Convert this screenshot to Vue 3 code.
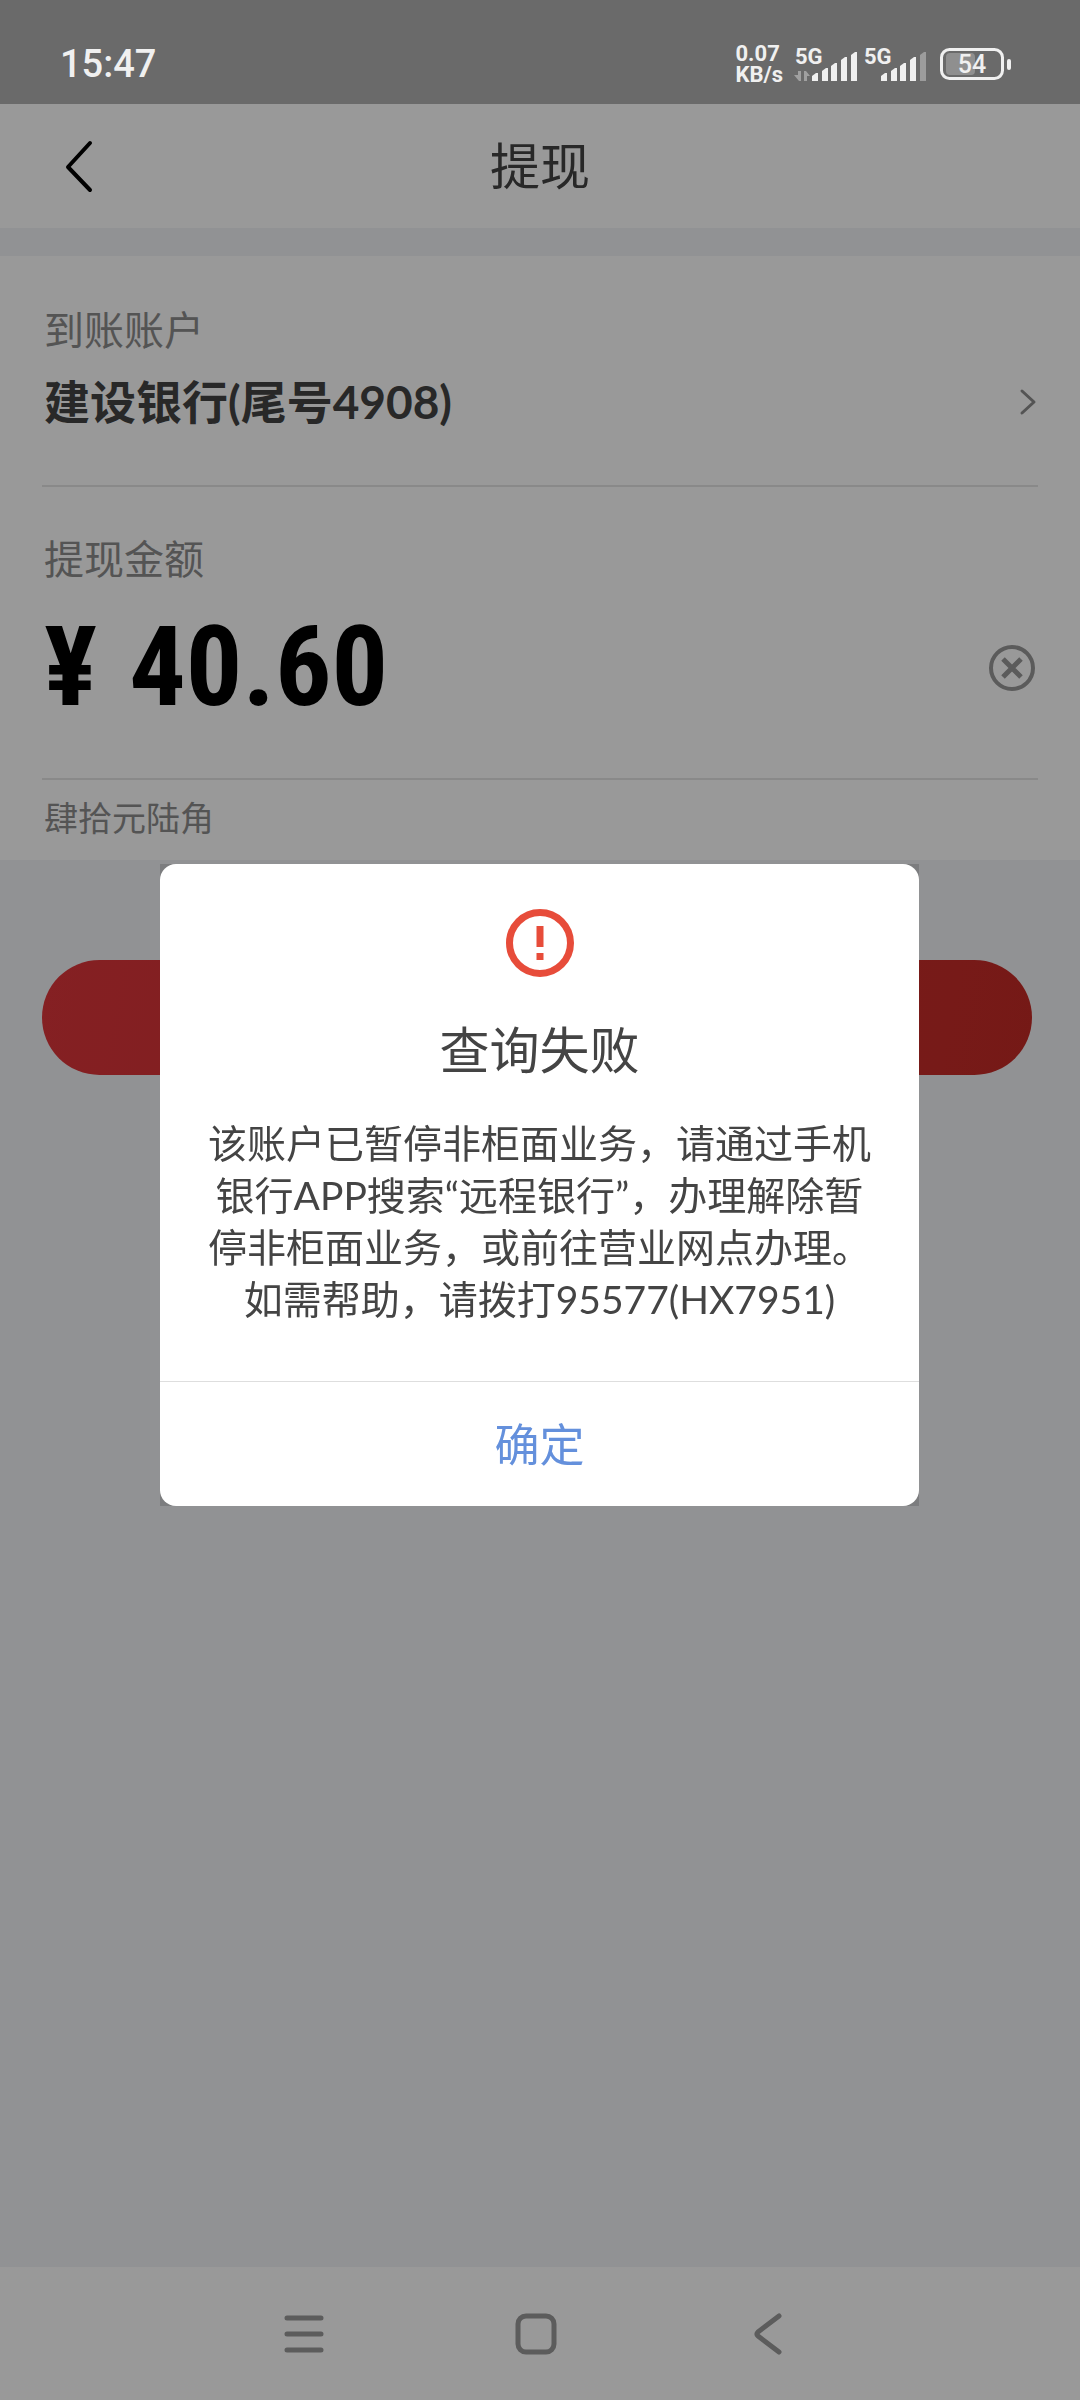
<template>
  <div class="page">
    <header class="status-bar">
      <span class="clock">15:47</span>
      <div class="status-icons">
        <div class="net-speed">
          <span>0.07</span>
          <span>KB/s</span>
        </div>
        <svg v-for="sim in sims" :key="sim.id" class="signal" viewBox="0 0 62 36">
          <text x="0" y="18" class="signal-text">5G</text>
          <g v-if="sim.data" fill="#a0a0a0">
            <path d="M6 25v10h-2l-5-6h4v-4z" />
            <path d="M9 35v-10h2l4 5h-3v5z" />
          </g>
          <path
            v-for="(bar, index) in bars"
            :key="index"
            :d="bar"
            :fill="index < sim.level ? '#f0f0f0' : '#9c9c9c'"
          />
        </svg>
        <svg class="battery" viewBox="0 0 72 32">
          <rect x="6" y="5" width="29" height="22" rx="4" fill="#8f8f8f" />
          <rect x="1.5" y="1.5" width="61" height="29" rx="8" fill="none" stroke="#f0f0f0" stroke-width="3" />
          <rect x="67" y="11" width="4" height="11" rx="2" fill="#f0f0f0" />
          <text x="32" y="25" text-anchor="middle" class="battery-text">54</text>
        </svg>
      </div>
    </header>

    <nav class="title-bar">
      <button class="back" type="button" aria-label="返回">
        <svg viewBox="0 0 30 54" width="30" height="54">
          <path d="M26 4L4 28l22 23" fill="none" stroke="#000" stroke-width="4" stroke-linecap="round" stroke-linejoin="round" />
        </svg>
      </button>
      <h1>提现</h1>
    </nav>

    <main class="content">
      <section class="card">
        <div class="account">
          <p class="label">到账账户</p>
          <button class="account-row" type="button">
            <span>建设银行(尾号4908)</span>
            <svg viewBox="0 0 16 28" width="16" height="28">
              <path d="M2 3l12 11L2 25" fill="none" stroke="#8c8c8c" stroke-width="3" stroke-linecap="round" stroke-linejoin="round" />
            </svg>
          </button>
        </div>
        <div class="amount">
          <label class="label" for="amount">提现金额</label>
          <div class="amount-row">
            <span class="currency">¥</span>
            <input id="amount" v-model="amount" type="text" inputmode="decimal" />
            <button class="clear" type="button" aria-label="清除" @click="amount = ''">
              <svg viewBox="0 0 48 48" width="48" height="48">
                <circle cx="24" cy="25" r="21" fill="none" stroke="#989898" stroke-width="4" />
                <path d="M15 16l18 18M33 16L15 34" stroke="#989898" stroke-width="5" />
              </svg>
            </button>
          </div>
        </div>
        <p class="amount-words">肆拾元陆角</p>
      </section>
      <button class="submit" type="button" aria-label="提现"></button>
    </main>

    <footer class="nav-bar">
      <button type="button" aria-label="菜单">
        <svg viewBox="0 0 44 44" width="44" height="44">
          <path d="M5 6h34M5 22h34M5 38h34" />
        </svg>
      </button>
      <button type="button" aria-label="主页">
        <svg viewBox="0 0 44 44" width="44" height="44">
          <rect x="4" y="4" width="36" height="36" rx="8" />
        </svg>
      </button>
      <button type="button" aria-label="后退">
        <svg viewBox="0 0 44 44" width="44" height="44">
          <path d="M33 4L12 20q-2 2 0 4l21 16" />
        </svg>
      </button>
    </footer>

    <div v-if="showDialog" class="overlay">
      <div class="dialog-frame">
        <div class="dialog" role="alertdialog" aria-labelledby="dialog-title">
          <svg class="warn" viewBox="0 0 68 68" width="68" height="68">
            <circle cx="34" cy="34" r="30.5" fill="none" stroke="#e74c3a" stroke-width="7" />
            <path d="M30.5 17h7v21h-7zM30.5 44h7v7h-7z" fill="#e74c3a" />
          </svg>
          <h2 id="dialog-title">查询失败</h2>
          <p class="message">
            <span v-for="line in messageLines" :key="line">{{ line }}</span>
          </p>
          <button class="confirm" type="button" @click="showDialog = false">确定</button>
        </div>
      </div>
    </div>
  </div>
</template>

<script setup>
import { ref } from 'vue'

const amount = ref('40.60')
const showDialog = ref(true)

const sims = [
  { id: 1, level: 5, data: true },
  { id: 2, level: 4, data: false }
]

// barres de signal, sommet en biais
const bars = [27, 22, 17, 11, 6].map((top, i) => {
  const x = 17 + i * 10 - (i > 1 ? 1 : 0)
  return `M${x} ${top + 3}l4 -3h2V35h-6z`
})

const messageLines = [
  '该账户已暂停非柜面业务，请通过手机',
  '银行APP搜索“远程银行”，办理解除暂',
  '停非柜面业务，或前往营业网点办理。',
  '如需帮助，请拨打95577(HX7951)'
]
</script>

<style>
body {
  margin: 0;
  background: #f2f4f7;
}
</style>

<style scoped>
.page {
  display: flex;
  flex-direction: column;
  min-height: 100vh;
  color: #444;
  font-family: Lato, "Noto Sans CJK SC", sans-serif;
}

h1,
h2,
p {
  margin: 0;
  font-weight: 400;
}

button {
  padding: 0;
  border: none;
  background: none;
  color: inherit;
  font-family: inherit;
  cursor: pointer;
}

svg {
  display: block;
  flex-shrink: 0;
  overflow: visible;
}

.status-bar {
  position: relative;
  z-index: 2;
  display: flex;
  align-items: center;
  justify-content: space-between;
  box-sizing: border-box;
  height: 104px;
  padding: 24px 68px 0 60px;
  background: #6a6a6a;
  color: #f0f0f0;
  font-family: Roboto, sans-serif;
}

.clock {
  font-size: 38px;
  font-weight: 500;
}

.status-icons {
  display: flex;
  align-items: center;
}

.net-speed {
  display: flex;
  flex-direction: column;
  margin-right: 12px;
  font-size: 22px;
  font-weight: 700;
  line-height: 21px;
}

.signal {
  width: 62px;
  height: 36px;
  margin-right: 7px;
}

.signal-text {
  fill: #f0f0f0;
  font-size: 22px;
  font-weight: 700;
}

.battery {
  width: 72px;
  height: 32px;
  margin-left: 7px;
}

.battery-text {
  fill: #f0f0f0;
  font-size: 25px;
  font-weight: 500;
}

.title-bar {
  display: grid;
  grid-template-columns: 1fr auto 1fr;
  align-items: center;
  height: 124px;
  background: #fff;
}

.title-bar h1 {
  font-size: 50px;
  line-height: 64px;
}

.back {
  justify-self: start;
  margin-left: 64px;
}

.content {
  flex: 1;
  padding-top: 28px;
}

.card {
  padding: 50px 42px 20px;
  background: #fff;
}

.label {
  display: block;
  padding-left: 2px;
  color: #8c8c8c;
  font-size: 40px;
  line-height: 48px;
}

.account {
  padding-bottom: 55px;
  border-bottom: 2px solid #e4e4e4;
}

.account-row {
  display: flex;
  align-items: center;
  justify-content: space-between;
  width: 100%;
  margin-top: 20px;
  padding: 0 2px;
  font-size: 46px;
  font-weight: 700;
  line-height: 56px;
}

.amount {
  padding: 48px 0 51px;
  border-bottom: 2px solid #e4e4e4;
}

.amount-row {
  display: flex;
  align-items: center;
  height: 120px;
  margin-top: 24px;
  padding: 0 2px;
  color: #000;
  font-family: "Roboto Condensed", "Liberation Sans", sans-serif;
  font-size: 112px;
  font-weight: 700;
  line-height: 120px;
}

.amount-row input {
  flex: 1;
  min-width: 0;
  height: 120px;
  margin-left: 32px;
  padding: 0;
  border: none;
  outline: none;
  background: none;
  color: inherit;
  font: inherit;
}

.amount-words {
  padding: 16px 0 0 2px;
  color: #8c8c8c;
  font-size: 34px;
  line-height: 44px;
}

.submit {
  display: block;
  width: calc(100% - 90px);
  height: 115px;
  margin: 100px 48px 0 42px;
  border-radius: 58px;
  background: linear-gradient(100deg, #de363b, #c42b26);
}

.nav-bar {
  display: grid;
  grid-template-columns: repeat(3, 1fr);
  align-items: center;
  height: 133px;
  padding: 0 196px 0 188px;
  background: #fff;
}

.nav-bar button {
  display: flex;
  justify-content: center;
}

.nav-bar svg {
  fill: none;
  stroke: #999;
  stroke-width: 5;
  stroke-linecap: round;
  stroke-linejoin: round;
}

.overlay {
  position: fixed;
  inset: 0;
  display: flex;
  align-items: center;
  padding: 0 161px 30px 160px;
  background: rgba(0, 0, 0, 0.4);
}

.dialog-frame {
  flex: 1;
  background: rgba(0, 0, 0, 0.15);
}

.dialog {
  display: flex;
  flex-direction: column;
  align-items: center;
  padding-top: 45px;
  border-radius: 16px;
  background: #fff;
}

.dialog h2 {
  margin-top: 41px;
  font-size: 50px;
  line-height: 64px;
}

.message {
  display: flex;
  flex-direction: column;
  align-items: center;
  margin: 35px 0 56px;
  font-size: 39px;
  line-height: 52px;
  white-space: nowrap;
}

.confirm {
  width: 100%;
  height: 125px;
  padding-bottom: 4px;
  border-top: 1px solid #dedede;
  color: #6490dc;
  font-size: 45px;
}
</style>
